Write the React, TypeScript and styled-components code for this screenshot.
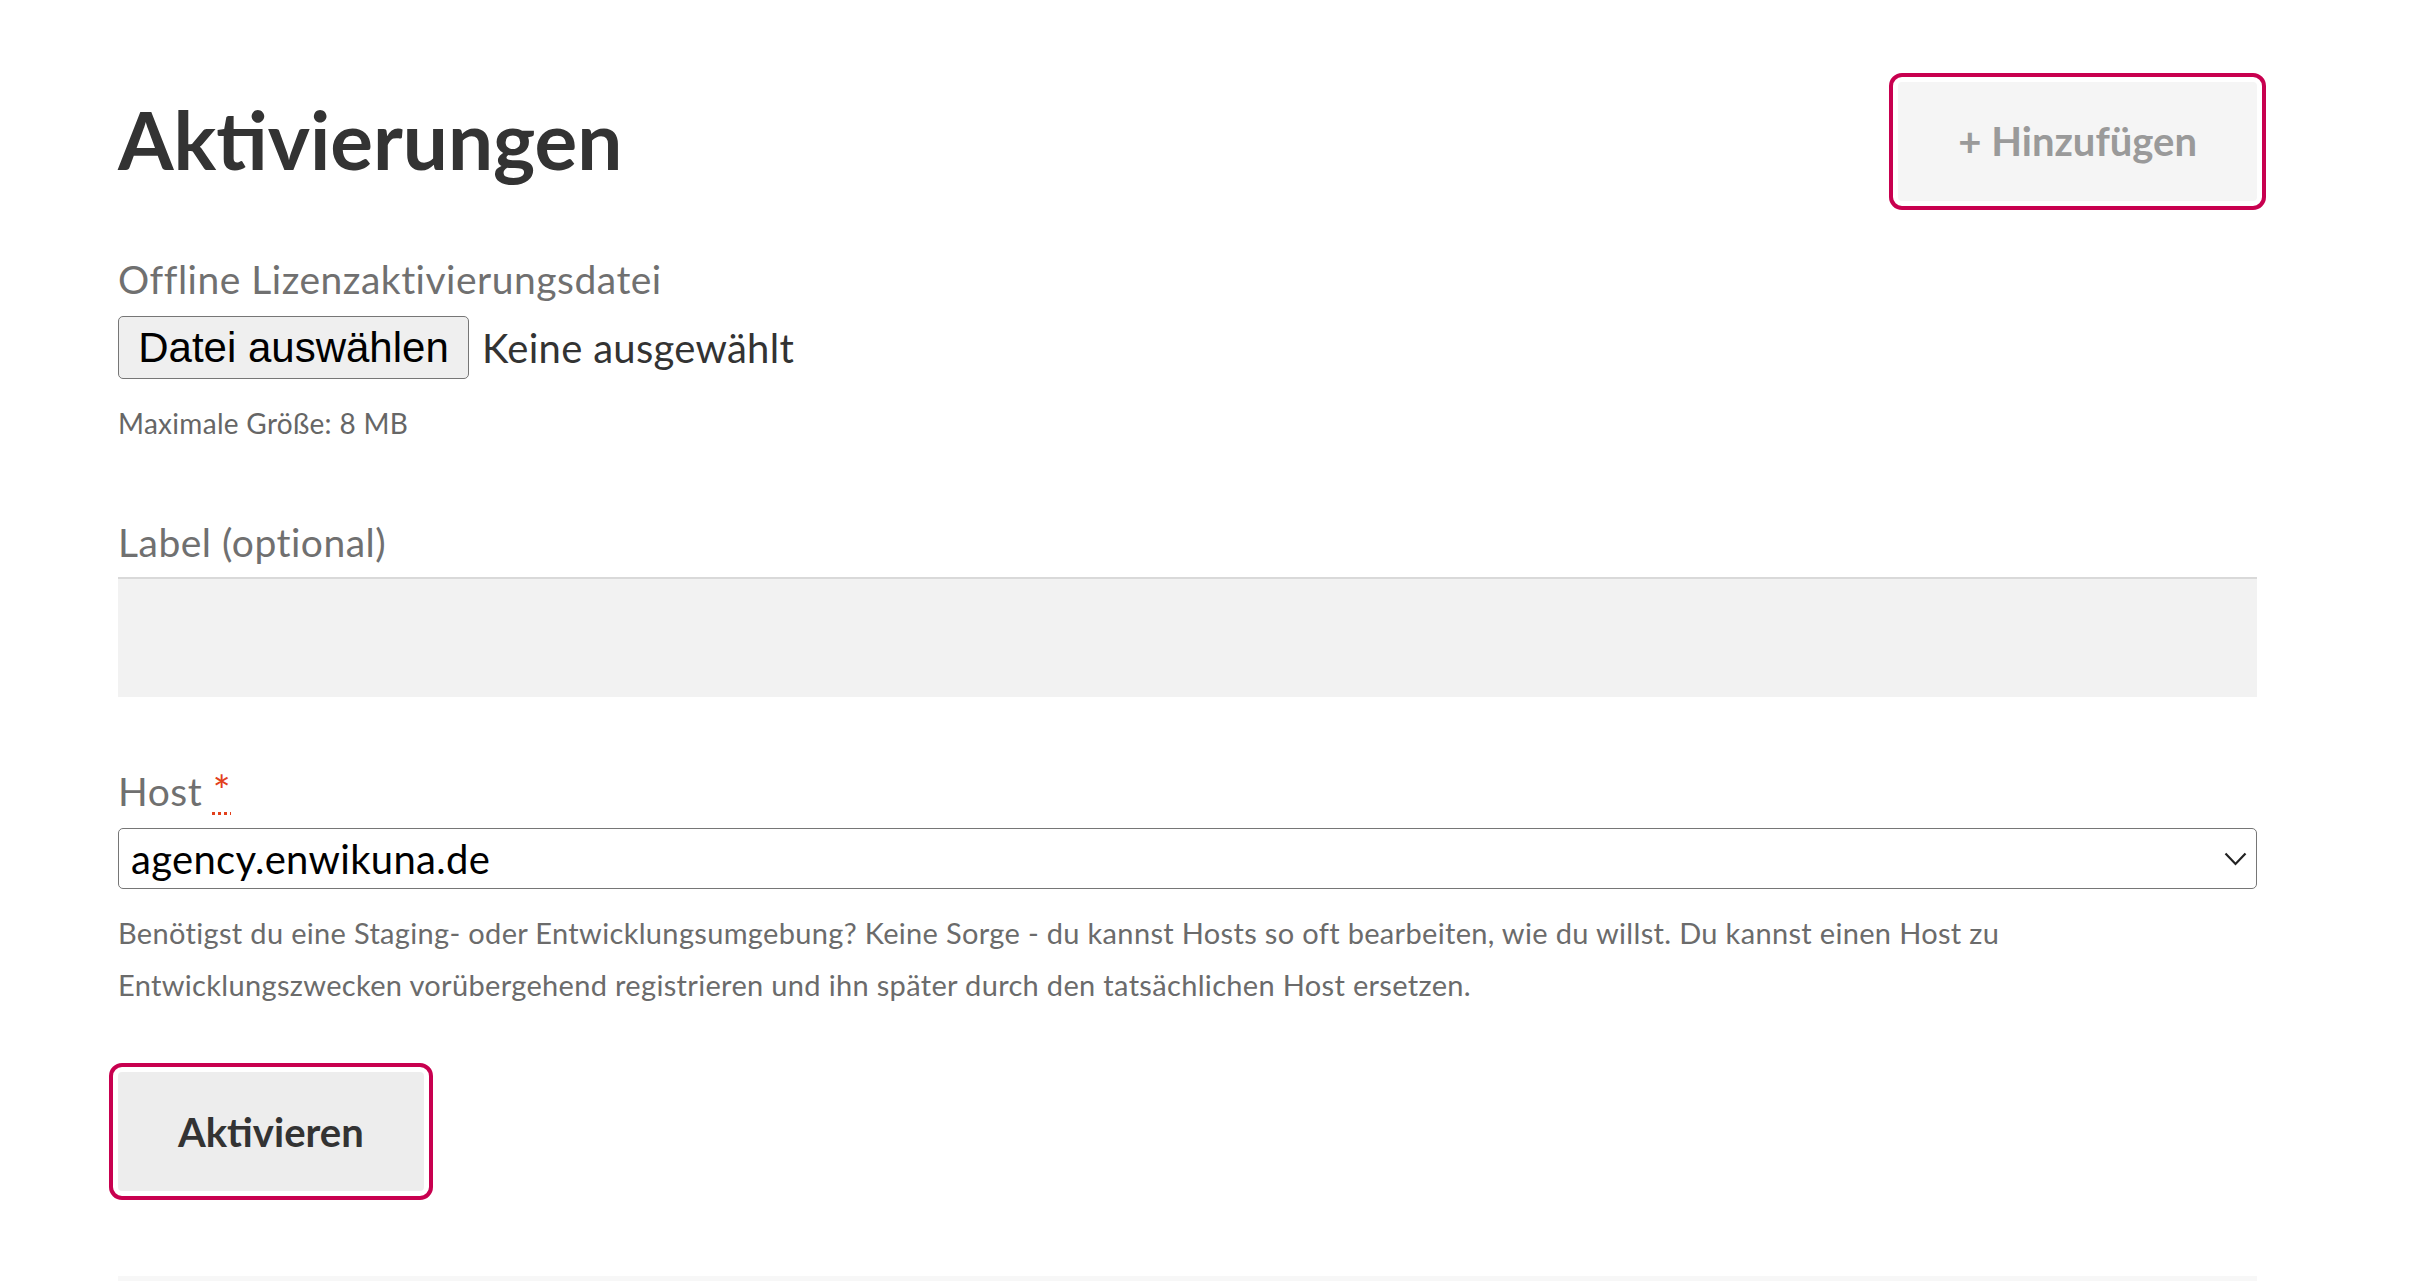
import React from 'react';
import styled, { createGlobalStyle } from 'styled-components';

const GlobalStyle = createGlobalStyle`
  html, body {
    margin: 0;
    padding: 0;
    background: #ffffff;
  }
  body {
    font-family: Lato, "Noto Sans", "Liberation Sans", sans-serif;
    color: #333333;
  }
`;

const Page = styled.main`
  padding: 82px 157px 0 118px;
  display: flex;
  flex-direction: column;
`;

const Header = styled.header`
  display: flex;
  align-items: center;
  justify-content: space-between;
  height: 118px;
`;

const Title = styled.h1`
  margin: 0 0 4px;
  font-size: 80px;
  line-height: 96px;
  font-weight: 700;
  color: #333333;
`;

const ActionButton = styled.button<{ $muted?: boolean }>`
  height: 119px;
  padding: 0 60px;
  border: none;
  border-radius: 4px;
  background: ${(p) => (p.$muted ? '#f5f5f5' : '#ededed')};
  color: ${(p) => (p.$muted ? '#9a9a9a' : '#333333')};
  font-family: Lato, "Noto Sans", sans-serif;
  font-size: 40px;
  font-weight: 700;
  cursor: pointer;
  outline: 4px solid #c8004f;
  outline-offset: 5px;
`;

const FieldLabel = styled.label<{ $gap: number }>`
  display: block;
  margin-top: ${(p) => p.$gap}px;
  font-size: 39px;
  line-height: 44px;
  letter-spacing: 0.5px;
  color: #707070;
`;

const Required = styled.abbr`
  color: #e2401c;
  font-size: 42px;
  text-decoration: underline dotted;
  text-decoration-thickness: 3px;
  text-underline-offset: 6px;
  cursor: help;
`;

const FileRow = styled.div`
  margin-top: 15px;
  display: flex;
  align-items: center;
  gap: 13px;
`;

const FileButton = styled.button`
  height: 63px;
  width: 351px;
  padding: 0;
  border: 1.5px solid #767676;
  border-radius: 5px;
  background: #efefef;
  color: #000000;
  font-family: "Liberation Sans", Arial, sans-serif;
  font-size: 42px;
`;

const FileName = styled.span`
  font-size: 40px;
  letter-spacing: 0.3px;
  color: #333333;
`;

const Hint = styled.p`
  margin: 29px 0 0;
  font-size: 28px;
  line-height: 30px;
  letter-spacing: 0.3px;
  color: #666666;
`;

const TextInput = styled.input`
  display: block;
  box-sizing: border-box;
  width: 100%;
  height: 120px;
  margin-top: 13px;
  padding: 0 16px;
  border: none;
  border-top: 2px solid #d9d9d9;
  background: #f2f2f2;
  font-family: Lato, sans-serif;
  font-size: 40px;
  outline: none;
`;

const SelectWrap = styled.div`
  position: relative;
  margin-top: 15px;
`;

const Select = styled.select`
  display: block;
  box-sizing: border-box;
  width: 100%;
  height: 61px;
  padding: 0 60px 0 12px;
  border: 1.5px solid #767676;
  border-radius: 5px;
  background: #ffffff;
  color: #000000;
  font-family: Lato, sans-serif;
  font-size: 40px;
  letter-spacing: 0.3px;
  appearance: none;
  outline: none;
`;

const Chevron = styled.svg`
  position: absolute;
  right: 10px;
  top: 24px;
  width: 23px;
  height: 14px;
  pointer-events: none;
`;

const HelpText = styled.p`
  margin: 18px 0 0;
  font-size: 29px;
  line-height: 52px;
  letter-spacing: 0.33px;
  color: #6b6b6b;
`;

const Footer = styled.div`
  margin-top: 61px;
`;

const Divider = styled.div`
  margin-top: 85px;
  height: 8px;
  background: #f7f7f7;
`;

export default function App() {
  return (
    <>
      <GlobalStyle />
      <Page>
        <Header>
          <Title>Aktivierungen</Title>
          <ActionButton $muted type="button">+ Hinzufügen</ActionButton>
        </Header>

        <FieldLabel $gap={57}>Offline Lizenzaktivierungsdatei</FieldLabel>
        <FileRow>
          <FileButton type="button">Datei auswählen</FileButton>
          <FileName>Keine ausgewählt</FileName>
        </FileRow>
        <Hint>Maximale Größe: 8 MB</Hint>

        <FieldLabel $gap={82} htmlFor="label">Label (optional)</FieldLabel>
        <TextInput id="label" type="text" />

        <FieldLabel $gap={71} htmlFor="host">
          Host <Required title="erforderlich">*</Required>
        </FieldLabel>
        <SelectWrap>
          <Select id="host" defaultValue="agency.enwikuna.de">
            <option value="agency.enwikuna.de">agency.enwikuna.de</option>
          </Select>
          <Chevron viewBox="0 0 23 14" fill="none">
            <path d="M1.5 1.5 L11.5 12 L21.5 1.5" stroke="#222" strokeWidth="2.2" />
          </Chevron>
        </SelectWrap>
        <HelpText>
          Benötigst du eine Staging- oder Entwicklungsumgebung? Keine Sorge - du kannst Hosts so oft bearbeiten,
          wie du willst. Du kannst einen Host zu Entwicklungszwecken vorübergehend registrieren und ihn später
          durch den tatsächlichen Host ersetzen.
        </HelpText>

        <Footer>
          <ActionButton type="button">Aktivieren</ActionButton>
        </Footer>
        <Divider />
      </Page>
    </>
  );
}
